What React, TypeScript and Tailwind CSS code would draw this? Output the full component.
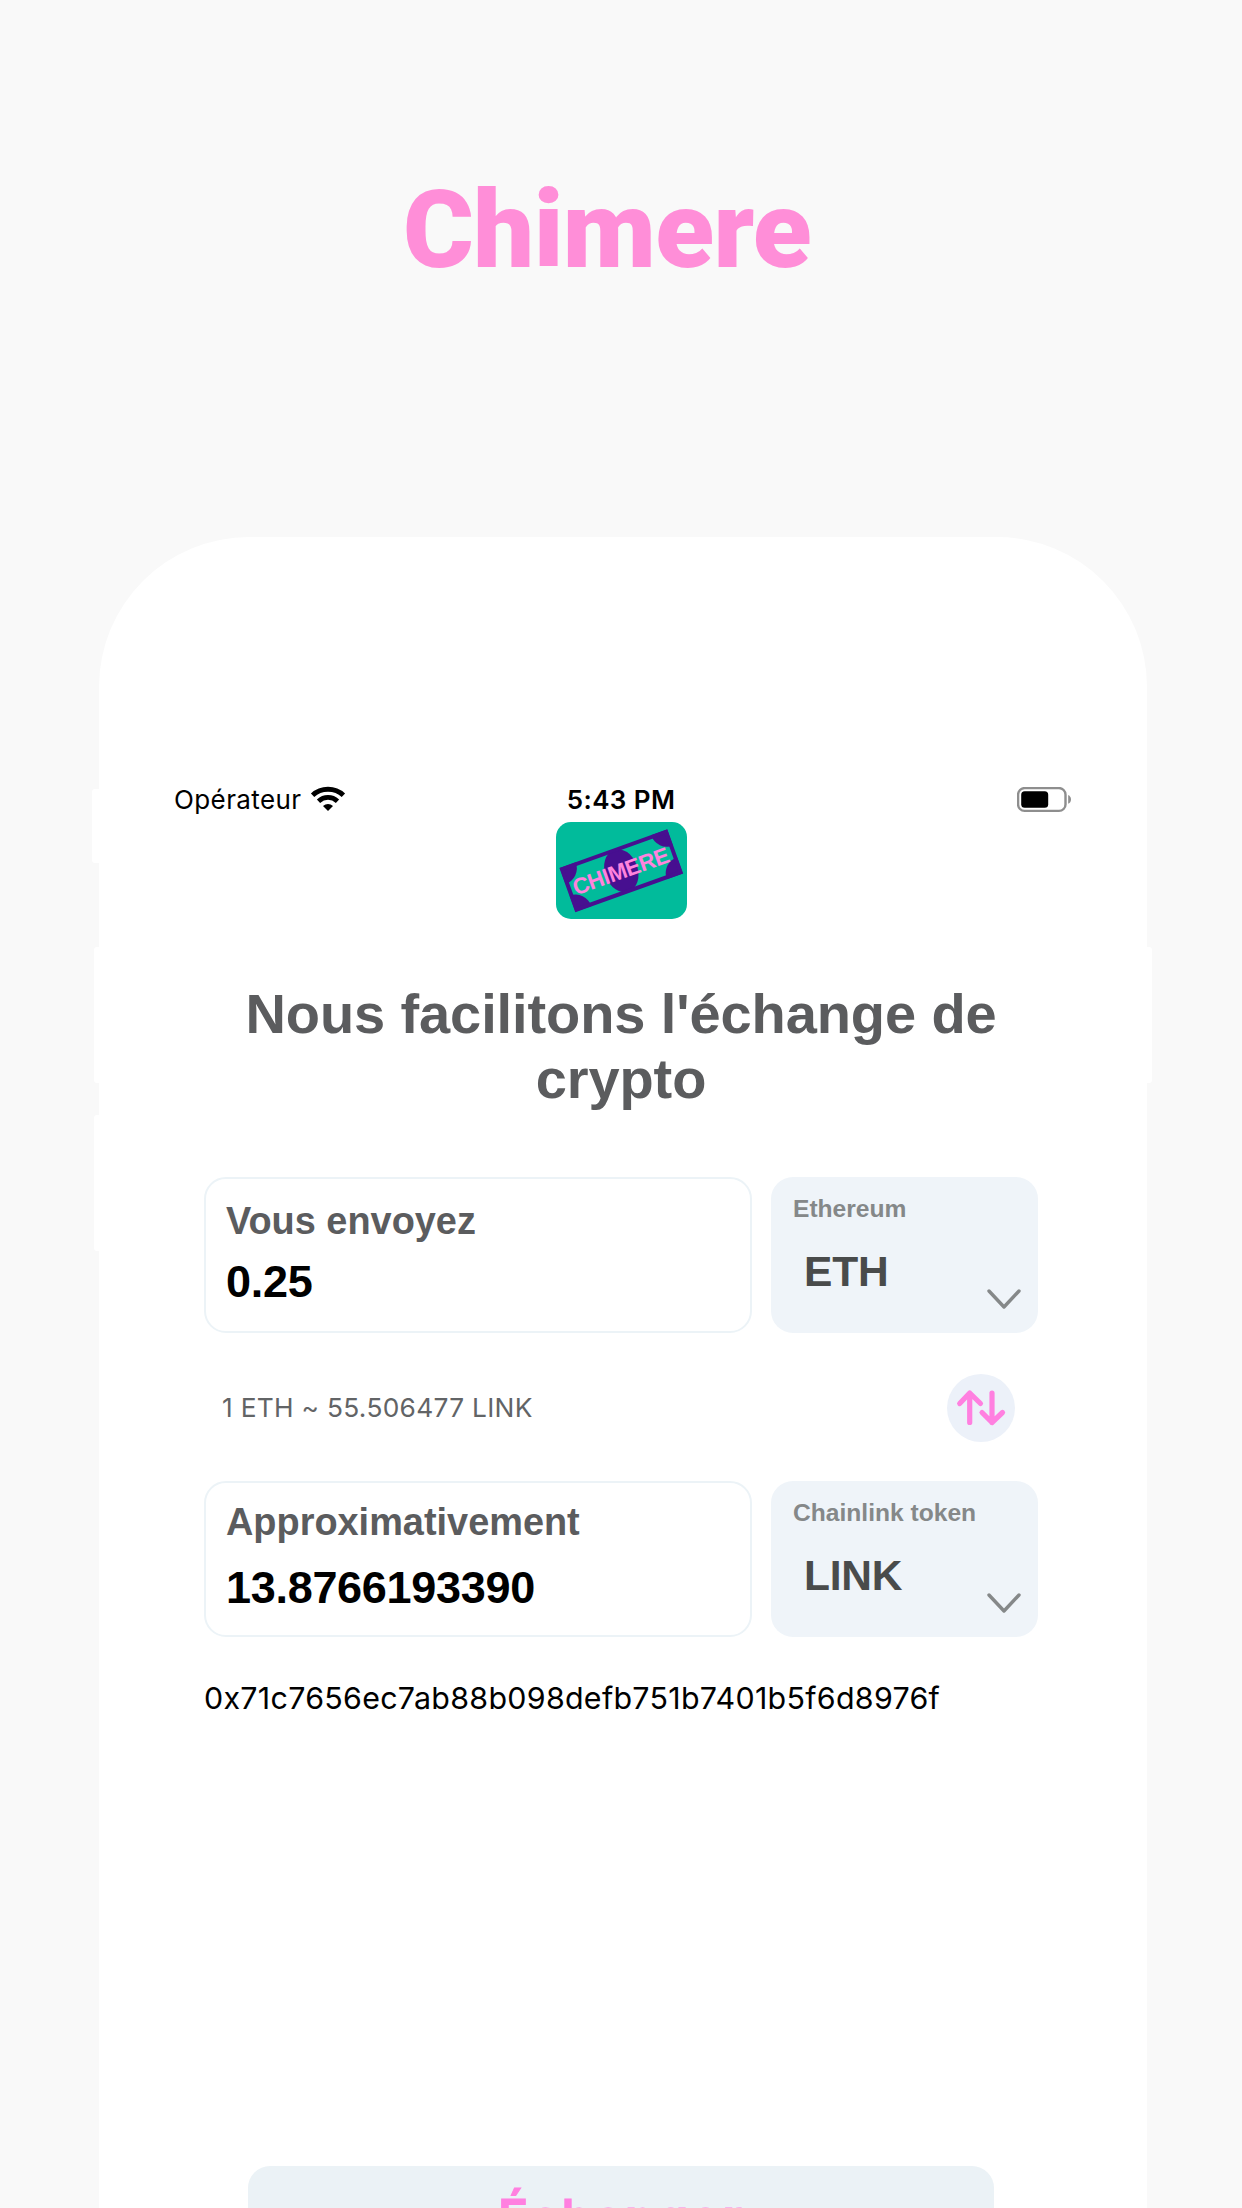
import React from "react";

function Wifi() {
  return (
    <svg className="mb-[3px] ml-2 h-[26px] w-[36px]" viewBox="0 0 36 26" fill="none" stroke="#000" strokeWidth="4.8">
      <path d="M2.6 9.3 C11 1.2 25 1.2 33.4 9.3" />
      <path d="M8.5 15.2 C14 10.2 22 10.2 27.5 15.2" />
      <path d="M13 20 C16 17.2 20 17.2 23 20 L18 25 Z" fill="#000" stroke="none" />
    </svg>
  );
}

function Battery() {
  return (
    <svg className="mb-px h-[26px] w-[56px]" viewBox="0 0 56 26">
      <rect x="1.1" y="1.1" width="47.4" height="22.8" rx="6.5" fill="none" stroke="#8e8e8e" strokeWidth="2.4" />
      <rect x="4.2" y="4.2" width="27" height="16.6" rx="3.5" fill="#000" />
      <path d="M51.2 8 C53.2 9 54 10.6 54 12.4 C54 14.2 53.2 15.8 51.2 16.8 Z" fill="#8e8e8e" />
    </svg>
  );
}

function Logo() {
  return (
    <svg className="mx-auto mt-[2px] block h-[97px] w-[131px]" viewBox="0 0 131 97">
      <rect width="131" height="97" rx="15" fill="#01bb9b" />
      <g transform="translate(65.3 48.7) rotate(-19.7)">
        <clipPath id="bill">
          <rect x="-57" y="-23.3" width="114" height="46.6" />
        </clipPath>
        <g clipPath="url(#bill)" fill="#470f90">
          <circle cx="-57" cy="-23" r="17" />
          <circle cx="57" cy="-23" r="17" />
          <circle cx="-57" cy="23" r="17" />
          <circle cx="57" cy="23" r="17" />
          <ellipse cx="0" cy="0" rx="16.5" ry="22" />
        </g>
        <rect x="-55.3" y="-21.5" width="110.6" height="43" fill="none" stroke="#470f90" strokeWidth="4" />
        <text x="-0.5" y="8" textAnchor="middle" textLength="101" fontFamily="Liberation Sans, sans-serif" fontWeight="700" fontSize="22.5" fill="#ff83dd">
          CHIMERE
        </text>
      </g>
    </svg>
  );
}

function Chevron() {
  return (
    <svg className="absolute right-[16px] bottom-[23px] h-[22px] w-[36px]" viewBox="0 0 36 22" fill="none" stroke="#858889" strokeWidth="3.4" strokeLinecap="round" strokeLinejoin="round">
      <path d="M3 3 L18 19 L33 3" />
    </svg>
  );
}

function Amount({ label, value, className }: { label: string; value: string; className: string }) {
  return (
    <div className={"flex h-[156px] w-[548px] flex-col rounded-[22px] border-2 border-[#ecf3f7] pl-[20px] font-bold " + className}>
      <div className="text-[37.9px] leading-[40px] text-[#5b5c5e]">{label}</div>
      <div className="text-[45px] leading-[48px] tracking-[-0.3px] text-black">{value}</div>
    </div>
  );
}

function Token({ name, code }: { name: string; code: string }) {
  return (
    <div className="relative h-[156px] w-[267px] rounded-[22px] bg-[#eff4f9] pt-[18px] font-bold">
      <div className="pl-[22px] text-[24.6px] leading-[28px] text-[#858889]">{name}</div>
      <div className="mt-[25px] pl-[33px] text-[42.5px] leading-[48px] tracking-[-0.2px] text-[#494b4b]">{code}</div>
      <Chevron />
    </div>
  );
}

export default function App() {
  return (
    <div className="h-[2208px] w-[1242px] overflow-hidden bg-[#f9f9f9] pt-[170px] font-['Liberation_Sans',sans-serif]">
      <h1 className="h-[120px] pl-[403px] font-['Roboto',sans-serif] text-[108px] leading-[120px] font-black tracking-[-0.6px] whitespace-nowrap text-[#ff8ed8]">Chimere</h1>

      <div className="relative mt-[247px] ml-[99px] h-[1671px] w-[1048px] rounded-t-[150px] bg-white">
        <div className="absolute top-[252px] -left-[7px] h-[74px] w-[10px] rounded-l-[3px] bg-white" />
        <div className="absolute top-[410px] -left-[5px] h-[136px] w-[10px] rounded-l-[3px] bg-white" />
        <div className="absolute top-[578px] -left-[5px] h-[136px] w-[10px] rounded-l-[3px] bg-white" />
        <div className="absolute top-[341px] -right-[5px] top-[410px] h-[136px] w-[10px] rounded-r-[3px] bg-white" />

        <div className="pt-[243px]">
          <div className="mr-[74px] ml-[75px] grid h-[40px] grid-cols-[1fr_auto_1fr] items-center font-['Inter',sans-serif] text-[26px] leading-[40px] whitespace-nowrap text-black">
            <div className="flex items-center">
              <span className="tracking-[0.4px]">Opérateur</span>
              <Wifi />
            </div>
            <span className="-ml-[5px] font-semibold tracking-[0.4px]">5:43 PM</span>
            <div className="flex justify-end">
              <Battery />
            </div>
          </div>

          <div className="w-[1044px]">
            <Logo />
            <h2 className="mt-[62px] text-center text-[56px] leading-[65px] font-bold tracking-[-0.1px] text-[#5b5c5e]">
              Nous facilitons l'échange de
              <br />
              crypto
            </h2>
          </div>
        </div>

        <div className="mt-[66px] ml-[105px] w-[834px]">
          <div className="flex justify-between">
            <Amount label="Vous envoyez" value="0.25" className="gap-[17px] pt-[22px]" />
            <Token name="Ethereum" code="ETH" />
          </div>
          <div className="mt-[41px] flex h-[68px] items-center justify-between pr-[23px] pl-[18px]">
            <span className="font-['Inter',sans-serif] text-[26.3px] leading-[32px] tracking-[0.3px] whitespace-nowrap text-[#626466]">1 ETH ~ 55.506477 LINK</span>
            <div className="size-[68px] rounded-full bg-[#ecf1f9]">
              <svg className="size-[68px]" viewBox="0 0 68 68" fill="none" stroke="#ff80e0" strokeWidth="5.2" strokeLinecap="round" strokeLinejoin="round">
                <path d="M22.7 48.5 V19 M12.7 29.5 L22.7 19 L33.5 29.5" />
                <path d="M45 19 V48.5 M35 38.5 L45 48.5 L55.5 38.5" />
              </svg>
            </div>
          </div>
          <div className="mt-[39px] flex justify-between">
            <Amount label="Approximativement" value="13.8766193390" className="gap-[22px] pt-[19px]" />
            <Token name="Chainlink token" code="LINK" />
          </div>
          <p className="mt-[41px] font-['Inter',sans-serif] text-[30.4px] leading-[40px] tracking-[0.29px] whitespace-nowrap text-black">0x71c7656ec7ab88b098defb751b7401b5f6d8976f</p>
        </div>

        <button className="mt-[448px] ml-[149px] flex h-[120px] w-[746px] items-start justify-center rounded-[22px] bg-[#ebf2f6] pt-[21px] font-['Inter',sans-serif] text-[50px] leading-[60px] font-semibold tracking-[2px] text-[#ff80e0] [paint-order:stroke] [stroke-linejoin:round] [-webkit-text-stroke:1px_#ff80e0]">
          Échanger
        </button>
      </div>
    </div>
  );
}
